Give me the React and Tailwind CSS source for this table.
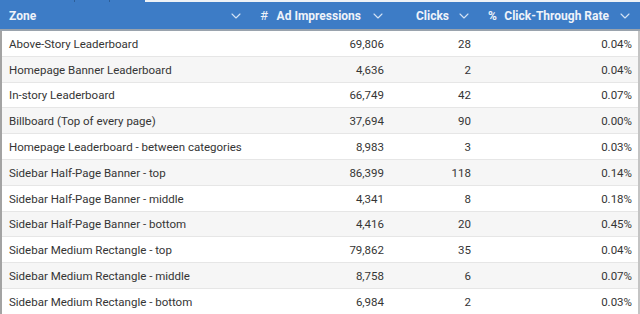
const rows = [
  ["Above-Story Leaderboard", "69,806", "28", "0.04%"],
  ["Homepage Banner Leaderboard", "4,636", "2", "0.04%"],
  ["In-story Leaderboard", "66,749", "42", "0.07%"],
  ["Billboard (Top of every page)", "37,694", "90", "0.00%"],
  ["Homepage Leaderboard - between categories", "8,983", "3", "0.03%"],
  ["Sidebar Half-Page Banner - top", "86,399", "118", "0.14%"],
  ["Sidebar Half-Page Banner - middle", "4,341", "8", "0.18%"],
  ["Sidebar Half-Page Banner - bottom", "4,416", "20", "0.45%"],
  ["Sidebar Medium Rectangle - top", "79,862", "35", "0.04%"],
  ["Sidebar Medium Rectangle - middle", "8,758", "6", "0.07%"],
  ["Sidebar Medium Rectangle - bottom", "6,984", "2", "0.03%"],
];

const cols = "grid grid-cols-[250px_138px_90px_1fr]";

// thin sort chevron like the report's header
function Chev() {
  return (
    <svg width="10" height="6" viewBox="0 0 10 6" className="shrink-0 text-[#d3e2f4]">
      <path d="M1 1 L5 5 L9 1" fill="none" stroke="currentColor" strokeWidth="1.1" strokeLinecap="round" strokeLinejoin="round" />
    </svg>
  );
}

export default function App() {
  return (
    <div className="w-[640px] h-[314px] overflow-hidden bg-white font-['Roboto','Liberation_Sans',sans-serif]">
      <div className="flex h-[2px]">
        <div className="w-[74px] bg-[#3d7cc6]" />
        <div className="w-px bg-[#2d5f99]" />
        <div className="w-[34px] bg-[#3d7cc6]" />
        <div className="w-px bg-[#2d5f99]" />
        <div className="w-[35px] bg-[#3d7cc6]" />
        <div className="flex-1 bg-[#eef2f6]" />
      </div>
      <div className={`${cols} h-[29px] bg-[#3d7cc6] border-b-2 border-[#9aa3ad] text-[#eef3fa] font-bold text-[12px] whitespace-nowrap`}>
        <div className="flex items-center pl-[9px] pr-[9px]">
          <span className="flex-1">Zone</span>
          <Chev />
        </div>
        <div className="flex items-center pl-[10px] pr-[5px]">
          <span className="text-[13px] font-normal">#</span>
          <span className="ml-auto mr-[12px]">Ad Impressions</span>
          <Chev />
        </div>
        <div className="flex items-center justify-end pr-[9px]">
          <span className="mr-[10px]">Clicks</span>
          <Chev />
        </div>
        <div className="flex items-center pl-[10px] pr-[10px]">
          <span>%</span>
          <span className="ml-auto mr-[11px]">Click-Through Rate</span>
          <Chev />
        </div>
      </div>
      <div className="w-[640px] border-l-2 border-[#a3a3a3] border-r-2 border-r-[#c4c4c4] text-[#353535] text-[11.5px]">
        {rows.map((r, i) => (
          <div
            key={i}
            className={`${cols} h-[25.8px] pt-[2px] border-b border-[#e6e6e6] ${i % 2 === 1 ? "bg-[#f6f6f6]" : "bg-white"}`}
          >
            <div className="flex items-center pl-[7px] whitespace-nowrap">{r[0]}</div>
            <div className="flex items-center justify-end pr-[6px]">{r[1]}</div>
            <div className="flex items-center justify-end pr-[9px]">{r[2]}</div>
            <div className="flex items-center justify-end pr-[6px]">{r[3]}</div>
          </div>
        ))}
      </div>
    </div>
  );
}
